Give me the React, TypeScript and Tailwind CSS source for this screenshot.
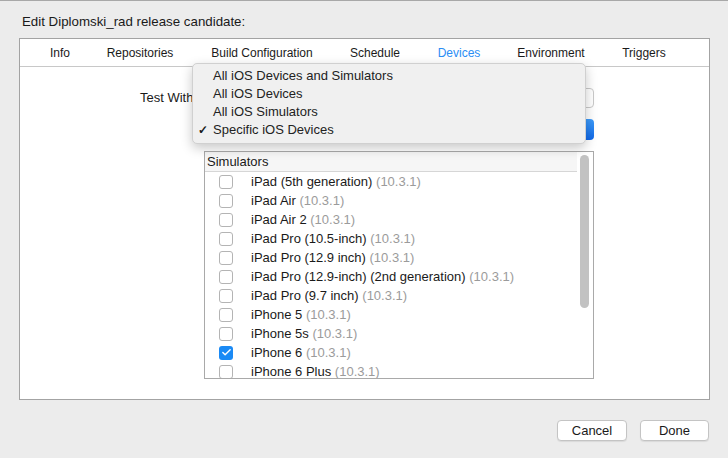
import { Check } from "lucide-react";

const tabs = [
  { name: "Info", w: "w-[80px]" },
  { name: "Repositories", w: "w-[80px]" },
  { name: "Build Configuration", w: "w-[164px]" },
  { name: "Schedule", w: "w-[62px]" },
  { name: "Devices", w: "w-[106px]" },
  { name: "Environment", w: "w-[78px]" },
  { name: "Triggers", w: "w-[108px]" },
];

const sims = [
  { name: "iPad (5th generation)", checked: false },
  { name: "iPad Air", checked: false },
  { name: "iPad Air 2", checked: false },
  { name: "iPad Pro (10.5-inch)", checked: false },
  { name: "iPad Pro (12.9 inch)", checked: false },
  { name: "iPad Pro (12.9-inch) (2nd generation)", checked: false },
  { name: "iPad Pro (9.7 inch)", checked: false },
  { name: "iPhone 5", checked: false },
  { name: "iPhone 5s", checked: false },
  { name: "iPhone 6", checked: true },
  { name: "iPhone 6 Plus", checked: false },
];

const menuItems = ["All iOS Devices and Simulators", "All iOS Devices", "All iOS Simulators", "Specific iOS Devices"];

export default function App() {
  return (
    <div
      className="relative w-[728px] h-[458px] bg-[#ececec] border-t border-[#a8a8a8] text-[#1a1a1a] overflow-hidden"
      style={{ fontFamily: '"Liberation Sans", Arial, sans-serif' }}
    >
      <div className="pl-[22px] pt-[13px] text-[13.3px] leading-[16px]">Edit Diplomski_rad release candidate:</div>

      {/* panel */}
      <div className="ml-[19px] mt-[8px] w-[691px] h-[362px] bg-white border border-[#a3a3a3] flex flex-col">
        <div className="h-[28px] shrink-0 flex items-center border-b border-[#c8c8c8] text-[12px]">
          {tabs.map((t) => (
            <div key={t.name} className={`${t.w} text-center ${t.name === "Devices" ? "text-[#2a8df4]" : ""}`}>
              {t.name}
            </div>
          ))}
        </div>

        <div className="flex flex-col pt-[21px]">
          <div className="flex items-center h-[20px]">
            <div className="w-[178px] text-right text-[13px] pr-[1px] whitespace-nowrap">Test With:</div>
            <div className="ml-[6px] w-[390px] h-[20px] rounded-[4px] border border-[#c9c9c9] bg-white" />
          </div>
          <div className="flex mt-[11px]">
            <div className="w-[184px]" />
            <div className="w-[390px] h-[21px] rounded-[4px] bg-gradient-to-b from-[#3d9bfa] to-[#1068e8]" />
          </div>
          <div className="flex mt-[11px]">
            <div className="w-[184px]" />
            <div className="relative w-[390px] h-[228px] border border-[#a9a9a9] overflow-hidden text-[13px]">
              <div className="h-[20px] flex items-center pl-[2px] pt-[1px] bg-[#f6f6f6] border-b border-[#d6d6d6] mr-[16px]">Simulators</div>
              {sims.map((s) => (
                <div key={s.name} className="h-[19px] flex items-center">
                  <div className="w-[14px]" />
                  {s.checked ? (
                    <div className="w-[14px] h-[14px] rounded-[3px] bg-[#1a8af5] flex items-center justify-center">
                      <Check className="w-[11px] h-[11px] text-white" strokeWidth={3} />
                    </div>
                  ) : (
                    <div className="w-[14px] h-[14px] rounded-[3px] border border-[#b4b4b4] bg-white" />
                  )}
                  <div className="ml-[18px] whitespace-nowrap">
                    {s.name} <span className="text-[#9b9b9b]">(10.3.1)</span>
                  </div>
                </div>
              ))}
              <div className="absolute right-[4px] top-[3px] w-[9px] h-[153px] rounded-full bg-[#c2c2c2]" />
            </div>
          </div>
        </div>
      </div>

      <div className="flex justify-end gap-[13px] mr-[19px] mt-[20px]">
        <button className="w-[70px] h-[21px] rounded-[4px] bg-white border border-[#c4c4c4] shadow-[0_1px_1px_rgba(0,0,0,0.08)] text-[13px]">Cancel</button>
        <button className="w-[69px] h-[21px] rounded-[4px] bg-white border border-[#c4c4c4] shadow-[0_1px_1px_rgba(0,0,0,0.08)] text-[13px]">Done</button>
      </div>

      {/* pop-up menu */}
      <div className="absolute left-[192px] top-[62px] w-[394px] h-[81px] rounded-[5px] bg-[#f0f0f0] border border-[#d0d0d0] shadow-[0_4px_12px_rgba(0,0,0,0.22)] pt-[3px] text-[13px]">
        {menuItems.map((m, i) => (
          <div key={m} className="h-[18px] flex items-center">
            <div className="w-[18px] text-right pr-[3px] text-[12px] font-bold">{i === 3 ? "✓" : ""}</div>
            <div className="ml-[2px] text-[#222]">{m}</div>
          </div>
        ))}
      </div>
    </div>
  );
}
